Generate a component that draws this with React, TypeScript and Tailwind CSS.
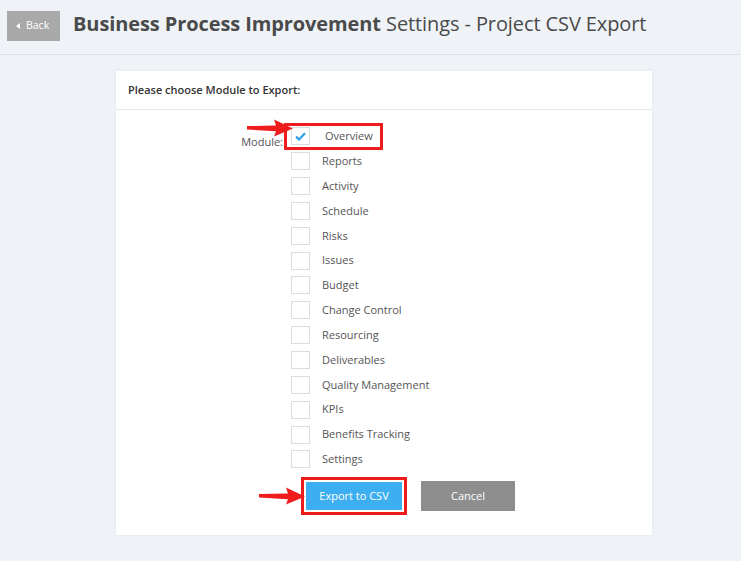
import React from 'react';

const modules = [
  'Overview',
  'Reports',
  'Activity',
  'Schedule',
  'Risks',
  'Issues',
  'Budget',
  'Change Control',
  'Resourcing',
  'Deliverables',
  'Quality Management',
  'KPIs',
  'Benefits Tracking',
  'Settings',
];

function RedArrow({ className }: { className?: string }) {
  return (
    <svg className={className} width="46" height="18" viewBox="0 0 46 18">
      <path d="M0 7 L29 6.6 L27 0.5 L46 9.5 L27 17.5 L29 12.2 L0 10.6 Z" fill="#ee1c1c" />
    </svg>
  );
}

function Checkbox({ checked }: { checked?: boolean }) {
  return (
    <span className="flex h-[18px] w-[19px] shrink-0 items-center justify-center border border-[#dcdcdc] bg-white">
      {checked && (
        <svg width="11" height="9" viewBox="0 0 11 9">
          <path d="M1 4.6 L4 7.4 L10 1.2" fill="none" stroke="#2b9fe8" strokeWidth="2.2" />
        </svg>
      )}
    </span>
  );
}

export default function App() {
  return (
    <div
      className="min-h-[561px] bg-[#eff3f7] text-[#444]"
      style={{ fontFamily: '"Open Sans", "Noto Sans", sans-serif' }}
    >
      {/* header */}
      <header className="flex h-[55px] items-start border-b border-[#dde2e6] pl-[7px] pt-[11px]">
        <button
          type="button"
          className="flex h-[30px] w-[53px] items-center gap-[6px] bg-[#a9a9a9] pl-[9px] text-[10.5px] text-white"
        >
          <span className="h-0 w-0 border-y-[3.5px] border-r-[4px] border-y-transparent border-r-white" />
          Back
        </button>
        <h1 className="ml-[13px] mt-[-2px] text-[20px] leading-[30px] tracking-[-0.1px] text-[#4a4a4a]">
          <span className="font-bold">Business Process Improvement</span> Settings - Project CSV Export
        </h1>
      </header>

      {/* card */}
      <div className="ml-[116px] mt-[16px] w-[536px] bg-white shadow-[0_0_2px_rgba(0,0,0,0.08)]">
        <div className="flex h-[39px] items-center border-b border-[#e8e8e8] pl-[12px] text-[11px] font-semibold text-[#333]">
          Please choose Module to Export:
        </div>

        <div className="relative flex pt-[14px]">
          <div className="w-[167px] pt-[10px] text-right text-[11px] text-[#555]">Module:</div>
          <div className="ml-[8px] flex flex-col">
            {modules.map((m, i) => (
              <div key={m} className="flex h-[24.85px] items-center">
                <Checkbox checked={i === 0} />
                <span className={`${i === 0 ? 'ml-[15px]' : 'ml-[12px]'} text-[11px] text-[#555]`}>{m}</span>
              </div>
            ))}
          </div>

          {/* highlight on Overview */}
          <div className="pointer-events-none absolute left-[168px] top-[13px] h-[27px] w-[99px] border-[3px] border-[#ee1c1c]" />
          <RedArrow className="absolute left-[131px] top-[9px]" />
        </div>

        {/* buttons */}
        <div className="relative flex pb-[20px] pl-[185px] pt-[5px]">
          <div className="border-[3px] border-[#ee1c1c] p-[2px]">
            <button
              type="button"
              className="h-[28px] w-[96px] bg-[#3daef0] text-[11px] font-medium text-white"
            >
              Export to CSV
            </button>
          </div>
          <button
            type="button"
            className="ml-[14px] mt-[4px] h-[30px] w-[94px] bg-[#8e8e8e] text-[11px] text-white"
          >
            Cancel
          </button>
          <RedArrow className="absolute left-[143px] top-[15px]" />
        </div>
      </div>
    </div>
  );
}
